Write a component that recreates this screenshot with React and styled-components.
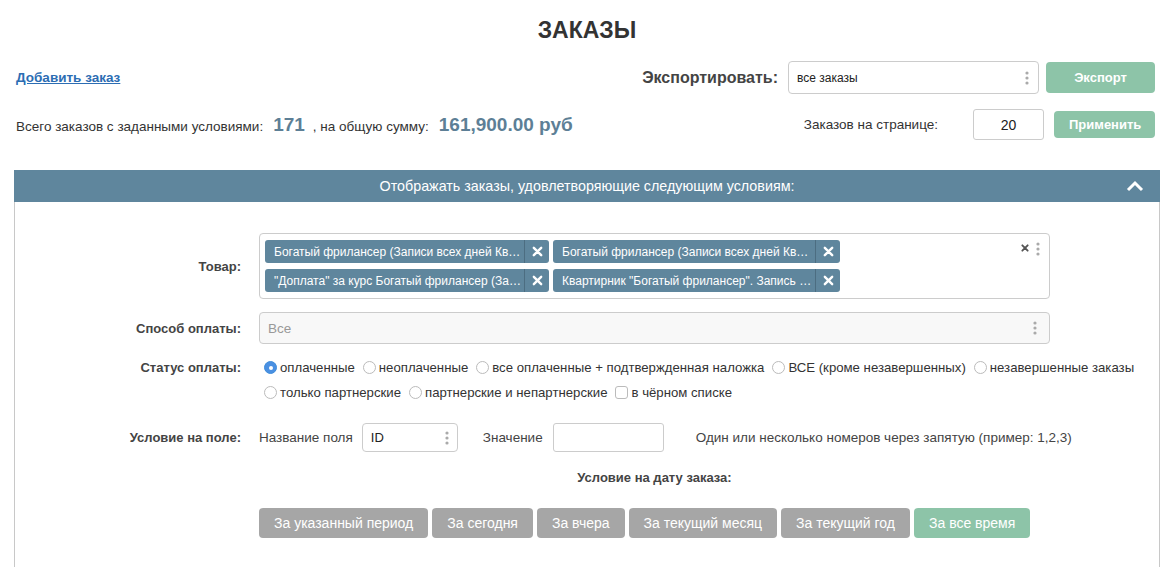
import React from 'react';
import styled, { createGlobalStyle } from 'styled-components';

const GlobalStyle = createGlobalStyle`
  body {
    margin: 0;
    background: #fff;
    font-family: "Liberation Sans", Arial, sans-serif;
    color: #333;
  }
`;

const steel = '#5f869d';
const green = '#8dc4a8';
const grey = '#a6a6a6';

const Page = styled.div`
  padding: 17px 15px 0 14px;
`;

const Title = styled.h1`
  margin: 0;
  text-align: center;
  font-size: 23px;
  line-height: 26px;
  font-weight: bold;
  color: #333;
`;

const TopRow = styled.div`
  display: flex;
  justify-content: space-between;
  align-items: center;
  padding: 0 5px 0 2px;
  margin-top: ${(p) => p.$top}px;
  height: ${(p) => p.$h}px;
`;

const AddLink = styled.a`
  font-size: 13.5px;
  font-weight: bold;
  color: #2c6db3;
  text-decoration: underline;
  cursor: pointer;
`;

const Group = styled.div`
  display: flex;
  align-items: center;
`;

const ExportLabel = styled.span`
  font-size: 16px;
  font-weight: bold;
  color: #444;
  margin-right: 10px;
`;

const SelectBox = styled.div`
  position: relative;
  box-sizing: border-box;
  display: flex;
  align-items: center;
  width: ${(p) => p.$w}px;
  height: ${(p) => p.$h}px;
  padding-left: ${(p) => p.$pad || 8}px;
  border: 1px solid #ccc;
  border-radius: 4px;
  background: ${(p) => (p.$muted ? '#f8f8f8' : '#fff')};
  font-size: ${(p) => p.$fs || 12}px;
  color: ${(p) => (p.$muted ? '#999' : '#222')};
`;

const DotsWrap = styled.span`
  position: absolute;
  right: ${(p) => p.$r || 9}px;
  top: ${(p) => (p.$top ? `${p.$top}px` : '50%')};
  transform: ${(p) => (p.$top ? 'none' : 'translateY(-50%)')};
  display: flex;
`;

const Dots = ({ right, top }) => (
  <DotsWrap $r={right} $top={top}>
    <svg width="4" height="14" viewBox="0 0 4 14">
      <circle cx="2" cy="2" r="1.6" fill="#aaa" />
      <circle cx="2" cy="7" r="1.6" fill="#aaa" />
      <circle cx="2" cy="12" r="1.6" fill="#aaa" />
    </svg>
  </DotsWrap>
);

const Button = styled.button`
  box-sizing: border-box;
  border: none;
  border-radius: 4px;
  background: ${(p) => (p.$grey ? grey : green)};
  color: #fff;
  font-family: inherit;
  font-size: ${(p) => p.$fs || 13}px;
  font-weight: ${(p) => (p.$bold ? 'bold' : 'normal')};
  height: ${(p) => p.$h}px;
  width: ${(p) => (p.$w ? `${p.$w}px` : 'auto')};
  padding: 0 15px;
  margin-left: ${(p) => p.$ml || 0}px;
  cursor: pointer;
`;

const Stats = styled.div`
  display: flex;
  align-items: baseline;
  font-size: 13.5px;
  color: #333;
`;

const Big = styled.span`
  font-size: 19px;
  font-weight: bold;
  color: #5d7f96;
  margin: 0 8px 0 10px;
`;

const PerPageLabel = styled.span`
  font-size: 13.5px;
  color: #333;
  margin-right: 35px;
`;

const NumInput = styled.div`
  box-sizing: border-box;
  width: 71px;
  height: 31px;
  border: 1px solid #ccc;
  border-radius: 3px;
  display: flex;
  align-items: center;
  justify-content: center;
  font-size: 14px;
  color: #222;
`;

const Panel = styled.section`
  margin-top: 30px;
  border: 1px solid #c8c8c8;
  border-top: none;
  border-bottom: none;
`;

const PanelHeader = styled.div`
  position: relative;
  height: 32px;
  margin: 0 -1px;
  background: ${steel};
  color: #fff;
  font-size: 14.3px;
  display: flex;
  align-items: center;
  justify-content: center;
`;

const Chevron = styled.svg`
  position: absolute;
  right: 16px;
  top: 10px;
`;

const Form = styled.div`
  display: grid;
  grid-template-columns: 226px 1fr;
  column-gap: 18px;
  align-items: center;
  padding: 31px 0 40px;
`;

const Label = styled.div`
  text-align: right;
  font-size: 13px;
  font-weight: bold;
  color: #444;
  align-self: ${(p) => (p.$top ? 'start' : 'center')};
  line-height: ${(p) => (p.$top ? '25px' : 'normal')};
  margin-top: ${(p) => p.$mt || 0}px;
`;

const Field = styled.div`
  grid-column: 2;
  margin-top: ${(p) => p.$mt || 0}px;
`;

const Multi = styled.div`
  position: relative;
  box-sizing: border-box;
  width: 791px;
  height: 66px;
  border: 1px solid #ccc;
  border-radius: 4px;
  padding: 6px 5px;
  display: flex;
  flex-wrap: wrap;
  align-content: flex-start;
  gap: 6px 4px;
`;

const Tag = styled.div`
  display: flex;
  align-items: center;
  height: 23px;
  width: ${(p) => p.$w}px;
  box-sizing: border-box;
  background: ${steel};
  border-radius: 3px;
  color: #fff;
  font-size: 12px;
  padding-left: 9px;
`;

const TagText = styled.span`
  flex: 1;
  white-space: nowrap;
  overflow: hidden;
`;

const TagRemove = styled.span`
  width: 24px;
  height: 23px;
  border-left: 1px solid #4c6d81;
  display: flex;
  align-items: center;
  justify-content: center;
`;

const ClearAll = styled.span`
  position: absolute;
  right: 20px;
  top: 8px;
  font-size: 11px;
  font-weight: bold;
  color: #555;
`;

const Cross = ({ size = 11, color = '#fff', w = 2.6 }) => (
  <svg width={size} height={size} viewBox="0 0 12 12">
    <path d="M2 2 L10 10 M10 2 L2 10" stroke={color} strokeWidth={w} strokeLinecap="round" />
  </svg>
);

const RadioLines = styled.div`
  display: flex;
  flex-direction: column;
  padding-left: 5px;
`;

const RadioLine = styled.div`
  display: flex;
  align-items: center;
  height: 25px;
  gap: 8px;
  white-space: nowrap;
`;

const Option = styled.label`
  display: flex;
  align-items: center;
  gap: 3px;
  font-size: 13.2px;
  color: #333;
`;

const Radio = styled.span`
  box-sizing: border-box;
  width: 13px;
  height: 13px;
  border-radius: ${(p) => (p.$square ? '3px' : '50%')};
  border: 1px solid ${(p) => (p.$on ? '#3f8ddb' : '#bbb')};
  background: ${(p) => (p.$on ? '#4a90e2' : '#fff')};
  display: flex;
  align-items: center;
  justify-content: center;
  &::after {
    content: '';
    display: ${(p) => (p.$on ? 'block' : 'none')};
    width: 4px;
    height: 4px;
    border-radius: 50%;
    background: #fff;
  }
`;

const CondRow = styled.div`
  display: flex;
  align-items: center;
  font-size: 13.5px;
  color: #444;
`;

const TextInput = styled.div`
  box-sizing: border-box;
  width: ${(p) => p.$w}px;
  height: 29px;
  border: 1px solid #ccc;
  border-radius: 3px;
  margin: 0 ${(p) => p.$mr}px 0 ${(p) => p.$ml}px;
`;

const Hint = styled.span`
  font-size: 13.5px;
  color: #444;
`;

const DateTitle = styled.div`
  width: 791px;
  text-align: center;
  font-size: 13px;
  font-weight: bold;
  color: #444;
`;

const DateButtons = styled.div`
  display: flex;
  gap: 4px;
`;

const tags = [
  { w: 284, t: 'Богатый фрилансер (Записи всех дней Кв…' },
  { w: 287, t: 'Богатый фрилансер (Записи всех дней Кв…' },
  { w: 284, t: '"Доплата" за курс Богатый фрилансер (За…' },
  { w: 287, t: 'Квартирник "Богатый фрилансер". Запись …' },
];

const dateButtons = [
  'За указанный период',
  'За сегодня',
  'За вчера',
  'За текущий месяц',
  'За текущий год',
];

export default function App() {
  return (
    <>
      <GlobalStyle />
      <Page>
        <Title>ЗАКАЗЫ</Title>

        <TopRow $top={18} $h={33}>
          <AddLink>Добавить заказ</AddLink>
          <Group>
            <ExportLabel>Экспортировать:</ExportLabel>
            <SelectBox $w={251} $h={33}>
              все заказы
              <Dots />
            </SelectBox>
            <Button $h={31} $w={109} $ml={7} $bold>
              Экспорт
            </Button>
          </Group>
        </TopRow>

        <TopRow $top={15} $h={31}>
          <Stats>
            Всего заказов с заданными условиями:
            <Big>171</Big>, на общую сумму:
            <Big>161,900.00 руб</Big>
          </Stats>
          <Group>
            <PerPageLabel>Заказов на странице:</PerPageLabel>
            <NumInput>20</NumInput>
            <Button $h={27} $w={101} $ml={10} $bold>
              Применить
            </Button>
          </Group>
        </TopRow>

        <Panel>
          <PanelHeader>
            Отображать заказы, удовлетворяющие следующим условиям:
            <Chevron width="18" height="12" viewBox="0 0 18 12">
              <polyline points="2,10 9,3 16,10" fill="none" stroke="#fff" strokeWidth="3" />
            </Chevron>
          </PanelHeader>

          <Form>
            <Label>Товар:</Label>
            <Field>
              <Multi>
                {tags.map((tag, i) => (
                  <Tag key={i} $w={tag.w}>
                    <TagText>{tag.t}</TagText>
                    <TagRemove>
                      <Cross />
                    </TagRemove>
                  </Tag>
                ))}
                <ClearAll>
                  <Cross size={8} color="#555" w={2.8} />
                </ClearAll>
                <Dots right={9} top={8} />
              </Multi>
            </Field>

            <Label $mt={13}>Способ оплаты:</Label>
            <Field $mt={13}>
              <SelectBox $w={791} $h={32} $muted $fs={13.5}>
                Все
                <Dots right={12} />
              </SelectBox>
            </Field>

            <Label $top $mt={11}>Статус оплаты:</Label>
            <Field $mt={11}>
              <RadioLines>
                <RadioLine>
                  <Option><Radio $on />оплаченные</Option>
                  <Option><Radio />неоплаченные</Option>
                  <Option><Radio />все оплаченные + подтвержденная наложка</Option>
                  <Option><Radio />ВСЕ (кроме незавершенных)</Option>
                  <Option><Radio />незавершенные заказы</Option>
                </RadioLine>
                <RadioLine>
                  <Option><Radio />только партнерские</Option>
                  <Option><Radio />партнерские и непартнерские</Option>
                  <Option><Radio $square />в чёрном списке</Option>
                </RadioLine>
              </RadioLines>
            </Field>

            <Label $mt={18}>Условие на поле:</Label>
            <Field $mt={18}>
              <CondRow>
                Название поля
                <SelectBox $w={96} $h={29} $fs={13} style={{ margin: '0 25px 0 9px' }}>
                  ID
                  <Dots right={8} />
                </SelectBox>
                Значение
                <TextInput $w={111} $ml={10} $mr={32} />
                <Hint>Один или несколько номеров через запятую (пример: 1,2,3)</Hint>
              </CondRow>
            </Field>

            <Field $mt={18}>
              <DateTitle>Условие на дату заказа:</DateTitle>
            </Field>

            <Field $mt={23}>
              <DateButtons>
                {dateButtons.map((b) => (
                  <Button key={b} $grey $h={30} $fs={14}>
                    {b}
                  </Button>
                ))}
                <Button $h={30} $fs={14}>
                  За все время
                </Button>
              </DateButtons>
            </Field>
          </Form>
        </Panel>
      </Page>
    </>
  );
}
